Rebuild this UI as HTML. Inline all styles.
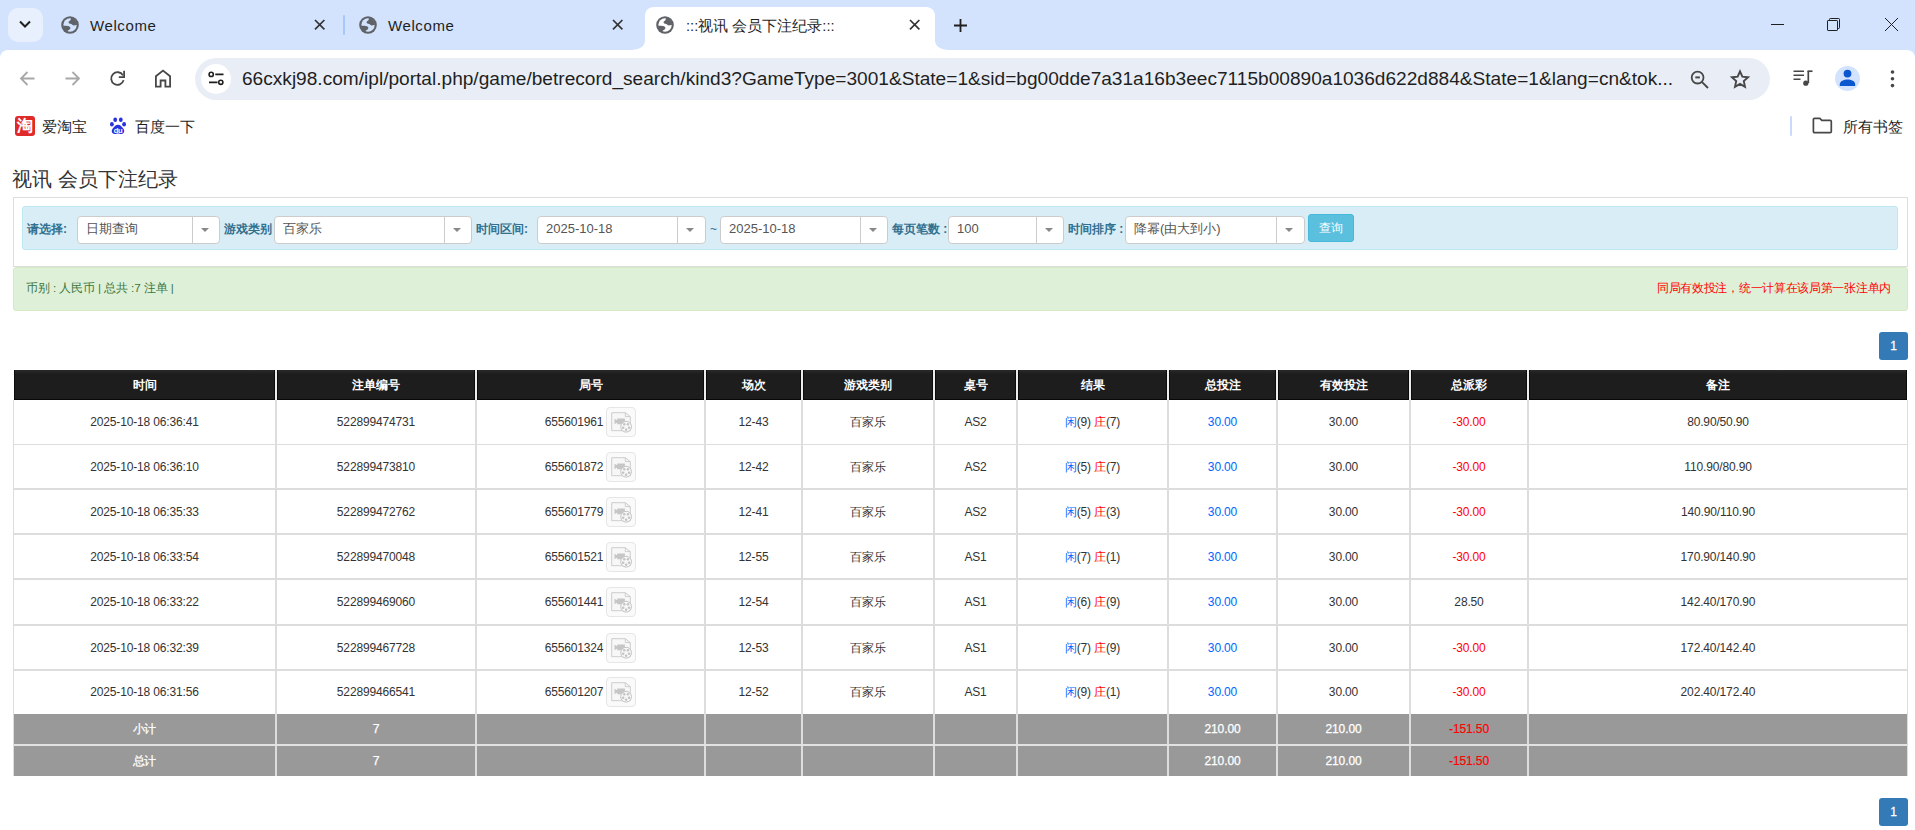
<!DOCTYPE html>
<html><head><meta charset="utf-8"><style>
*{box-sizing:border-box;}
html,body{margin:0;padding:0;}
body{width:1915px;height:830px;overflow:hidden;background:#fff;position:relative;font-family:"Liberation Sans",sans-serif;color:#333;}
.abs{position:absolute;}
#strip{position:absolute;left:0;top:0;width:1915px;height:58px;background:#d3e3fd;}
#tb{position:absolute;left:0;top:50px;width:1915px;height:98px;background:#fff;border-radius:8px 8px 0 0;}
.tabtxt{position:absolute;top:15.6px;font-size:15px;line-height:20px;color:#1f1f1f;white-space:nowrap;letter-spacing:0.6px;}
#omni{position:absolute;left:195px;top:58px;width:1575px;height:42px;border-radius:21px;background:#e9eef6;}
.url{position:absolute;left:242px;top:67px;font-size:19.1px;line-height:24px;color:#1f1f1f;white-space:nowrap;}
.bm{position:absolute;top:118px;font-size:15px;line-height:18px;color:#1f1f1f;white-space:nowrap;}
</style></head><body>
<div id="strip">
<div class="abs" style="left:8px;top:8px;width:35px;height:34px;border-radius:10px;background:#e9f0fd;"></div>
<svg class="abs" style="left:18px;top:18px" width="14" height="12" viewBox="0 0 14 12"><path d="M2 3.5 L7 8.5 L12 3.5" fill="none" stroke="#1f1f1f" stroke-width="2"/></svg>
<svg class="abs" style="left:61px;top:16px" width="18" height="18" viewBox="-9 -9 18 18"><circle r="8.8" fill="#5f6368"/><circle r="6.7" fill="#d3e3fd"/><path d="M0.9 -7.2 C0.8 -5.4 0.8 -4.6 -0.6 -3.9 C-1.7 -3.3 -1.7 -2.0 -0.6 -1.5 C0.6 -1.0 1.7 -1.0 2.3 -0.2 C2.9 0.5 4 0.6 5 0.3 L7.2 -0.2 A7.2 7.2 0 0 0 0.9 -7.2 Z" fill="#5f6368"/><path d="M-7.1 0.4 C-5 0.6 -2.3 0.6 -1.0 1.3 C0 1.9 0.6 2.5 0.3 3.4 C0 4.2 -0.8 4.6 -1.8 5.2 C-2.3 5.6 -2.3 6.4 -2.1 7.0 A7.2 7.2 0 0 1 -7.1 0.4 Z" fill="#5f6368"/></svg>
<div class="tabtxt" style="left:90px;">Welcome</div>
<svg class="abs" style="left:313.3px;top:18.3px" width="13.4" height="13.4" viewBox="-6.7 -6.7 13.4 13.4"><path d="M-4.7 -4.7 L4.7 4.7 M4.7 -4.7 L-4.7 4.7" stroke="#333333" stroke-width="1.7"/></svg>
<div class="abs" style="left:343px;top:15px;width:2px;height:20px;border-radius:1px;background:#a8c7fa;"></div>
<svg class="abs" style="left:359px;top:16px" width="18" height="18" viewBox="-9 -9 18 18"><circle r="8.8" fill="#5f6368"/><circle r="6.7" fill="#d3e3fd"/><path d="M0.9 -7.2 C0.8 -5.4 0.8 -4.6 -0.6 -3.9 C-1.7 -3.3 -1.7 -2.0 -0.6 -1.5 C0.6 -1.0 1.7 -1.0 2.3 -0.2 C2.9 0.5 4 0.6 5 0.3 L7.2 -0.2 A7.2 7.2 0 0 0 0.9 -7.2 Z" fill="#5f6368"/><path d="M-7.1 0.4 C-5 0.6 -2.3 0.6 -1.0 1.3 C0 1.9 0.6 2.5 0.3 3.4 C0 4.2 -0.8 4.6 -1.8 5.2 C-2.3 5.6 -2.3 6.4 -2.1 7.0 A7.2 7.2 0 0 1 -7.1 0.4 Z" fill="#5f6368"/></svg>
<div class="tabtxt" style="left:388px;">Welcome</div>
<svg class="abs" style="left:611.3px;top:18.3px" width="13.4" height="13.4" viewBox="-6.7 -6.7 13.4 13.4"><path d="M-4.7 -4.7 L4.7 4.7 M4.7 -4.7 L-4.7 4.7" stroke="#333333" stroke-width="1.7"/></svg>
<svg class="abs" style="left:629px;top:7px" width="322" height="43" viewBox="0 0 322 43"><path d="M0 43 C8 43 16 41 16 33 L16 9 C16 3.5 19.5 0 25 0 L297 0 C302.5 0 306 3.5 306 9 L306 33 C306 41 314 43 322 43 Z" fill="#fff"/></svg>
<svg class="abs" style="left:656px;top:16px" width="18" height="18" viewBox="-9 -9 18 18"><circle r="8.8" fill="#5f6368"/><circle r="6.7" fill="#fff"/><path d="M0.9 -7.2 C0.8 -5.4 0.8 -4.6 -0.6 -3.9 C-1.7 -3.3 -1.7 -2.0 -0.6 -1.5 C0.6 -1.0 1.7 -1.0 2.3 -0.2 C2.9 0.5 4 0.6 5 0.3 L7.2 -0.2 A7.2 7.2 0 0 0 0.9 -7.2 Z" fill="#5f6368"/><path d="M-7.1 0.4 C-5 0.6 -2.3 0.6 -1.0 1.3 C0 1.9 0.6 2.5 0.3 3.4 C0 4.2 -0.8 4.6 -1.8 5.2 C-2.3 5.6 -2.3 6.4 -2.1 7.0 A7.2 7.2 0 0 1 -7.1 0.4 Z" fill="#5f6368"/></svg>
<div class="tabtxt" style="left:686px;letter-spacing:0;font-size:14.7px;">:::视讯 会员下注纪录:::</div>
<svg class="abs" style="left:908.3px;top:18.3px" width="13.4" height="13.4" viewBox="-6.7 -6.7 13.4 13.4"><path d="M-4.7 -4.7 L4.7 4.7 M4.7 -4.7 L-4.7 4.7" stroke="#333333" stroke-width="1.7"/></svg>
<svg class="abs" style="left:953px;top:18px" width="15" height="15" viewBox="0 0 15 15"><path d="M7.5 1 V14 M1 7.5 H14" stroke="#1f1f1f" stroke-width="1.8"/></svg>
<div class="abs" style="left:1771px;top:24px;width:13px;height:1px;background:#1f1f1f;"></div>
<svg class="abs" style="left:1826px;top:17px" width="15" height="15" viewBox="0 0 15 15"><path d="M3.5 3.5 V2.3 C3.5 1.8 3.8 1.5 4.3 1.5 H12.7 C13.2 1.5 13.5 1.8 13.5 2.3 V10.7 C13.5 11.2 13.2 11.5 12.7 11.5 H11.5" fill="none" stroke="#1f1f1f" stroke-width="1"/><rect x="1.5" y="3.5" width="10" height="10" rx="0.6" fill="none" stroke="#1f1f1f" stroke-width="1"/></svg>
<svg class="abs" style="left:1884px;top:17px" width="15" height="15" viewBox="0 0 15 15"><path d="M1 1 L14 14 M14 1 L1 14" stroke="#1f1f1f" stroke-width="1"/></svg>
</div>
<div id="tb"></div>
<div id="omni"></div>
<svg class="abs" style="left:19px;top:70px" width="17" height="17" viewBox="0 0 17 17"><path d="M15.5 8.5 H2.5 M8.5 2 L2 8.5 L8.5 15" fill="none" stroke="#a8a8a8" stroke-width="1.8"/></svg>
<svg class="abs" style="left:64px;top:70px" width="17" height="17" viewBox="0 0 17 17"><path d="M1.5 8.5 H14.5 M8.5 2 L15 8.5 L8.5 15" fill="none" stroke="#a8a8a8" stroke-width="1.8"/></svg>
<svg class="abs" style="left:108px;top:69px" width="20" height="20" viewBox="0 0 20 20"><path d="M14.96 6.35 A6.3 6.3 0 1 0 15.59 11.13" fill="none" stroke="#474747" stroke-width="1.8"/><path d="M16.1 1.8 V8.2 H10.8" fill="none" stroke="#474747" stroke-width="1.8"/></svg>
<svg class="abs" style="left:153.5px;top:69px" width="18" height="19" viewBox="0 0 18 19"><path d="M1.9 17.6 V7.2 L9 1.6 L16.1 7.2 V17.6 H11.4 V11.5 H6.6 V17.6 Z" fill="none" stroke="#474747" stroke-width="1.8" stroke-linejoin="miter"/></svg>
<div class="abs" style="left:201px;top:64px;width:30px;height:30px;border-radius:15px;background:#fff;"></div>
<svg class="abs" style="left:208px;top:71px" width="17" height="16" viewBox="0 0 17 16"><circle cx="3.2" cy="3.4" r="2.1" fill="none" stroke="#1f1f1f" stroke-width="1.6"/><path d="M7.3 3.4 H15.5 M1 11.3 H9.5" stroke="#1f1f1f" stroke-width="1.7"/><circle cx="12.8" cy="11.3" r="2.1" fill="none" stroke="#1f1f1f" stroke-width="1.6"/></svg>
<div class="url">66cxkj98.com/ipl/portal.php/game/betrecord_search/kind3?GameType=3001&amp;State=1&amp;sid=bg00dde7a31a16b3eec7115b00890a1036d622d884&amp;State=1&amp;lang=cn&amp;tok...</div>
<svg class="abs" style="left:1690px;top:70px" width="20" height="20" viewBox="0 0 20 20"><circle cx="7.6" cy="7.6" r="5.9" fill="none" stroke="#474747" stroke-width="1.8"/><path d="M11.8 11.8 L18 18" stroke="#474747" stroke-width="1.9"/><path d="M5.3 7.4 H9.9" stroke="#474747" stroke-width="2"/></svg>
<svg class="abs" style="left:1729px;top:69px" width="22" height="21" viewBox="0 0 22 21"><path d="M11.00 2.40 L13.35 7.66 L19.08 8.27 L14.80 12.14 L16.00 17.78 L11.00 14.90 L6.00 17.78 L7.20 12.14 L2.92 8.27 L8.65 7.66 Z" fill="none" stroke="#474747" stroke-width="1.9" stroke-linejoin="miter" stroke-miterlimit="3"/></svg>
<svg class="abs" style="left:1793px;top:70px" width="21" height="17" viewBox="0 0 21 17"><path d="M0.5 1.2 H11 M0.5 5.2 H11 M0.5 9.2 H7.5" stroke="#474747" stroke-width="1.6"/><path d="M14.5 1.2 H19.5" stroke="#474747" stroke-width="1.7"/><path d="M15.3 1 V13" stroke="#474747" stroke-width="1.7"/><circle cx="12.8" cy="13.2" r="2.6" fill="#474747"/></svg>
<div class="abs" style="left:1835px;top:66px;width:25px;height:25px;border-radius:13px;background:#d3e3fd;"></div>
<svg class="abs" style="left:1837px;top:69px" width="21" height="19" viewBox="0 0 21 19"><circle cx="10.5" cy="4.6" r="3.9" fill="#0b57d0"/><path d="M2.8 16.9 V15.3 C2.8 11.8 7 10.4 10.5 10.4 C14 10.4 18.2 11.8 18.2 15.3 V16.9 Z" fill="#0b57d0"/></svg>
<svg class="abs" style="left:1888px;top:69px" width="9" height="20" viewBox="0 0 9 20"><circle cx="4.5" cy="3" r="1.8" fill="#474747"/><circle cx="4.5" cy="9.7" r="1.8" fill="#474747"/><circle cx="4.5" cy="16.6" r="1.8" fill="#474747"/></svg>
<div class="abs" style="left:15px;top:116px;width:20px;height:20px;border-radius:3px;background:#e02a2a;"></div>
<div class="abs" style="left:15px;top:116px;width:20px;height:20px;font-size:16px;line-height:20px;text-align:center;color:#fff;font-weight:bold;">淘</div>
<div class="bm" style="left:42px;">爱淘宝</div>
<svg class="abs" style="left:109px;top:117px" width="18" height="18" viewBox="0 0 18 18"><ellipse cx="2.9" cy="7.3" rx="1.9" ry="2.3" fill="#2932e1"/><ellipse cx="6.2" cy="2.8" rx="1.9" ry="2.3" fill="#2932e1"/><ellipse cx="11.8" cy="2.8" rx="1.9" ry="2.3" fill="#2932e1"/><ellipse cx="15.1" cy="7.3" rx="1.9" ry="2.3" fill="#2932e1"/><path d="M9 7.8 C6.5 7.8 5.3 10 3.6 11.8 C2.1 13.4 2.6 17 5.5 17 C7 17 8 16.5 9 16.5 C10 16.5 11 17 12.5 17 C15.4 17 15.9 13.4 14.4 11.8 C12.7 10 11.5 7.8 9 7.8 Z" fill="#2932e1"/><text x="9" y="15.8" font-size="7.6" font-family="Liberation Sans" font-weight="bold" fill="#fff" text-anchor="middle" letter-spacing="-0.3">du</text></svg>
<div class="bm" style="left:135px;">百度一下</div>
<div class="abs" style="left:1790px;top:116px;width:2px;height:20px;border-radius:1px;background:#c9dafc;"></div>
<svg class="abs" style="left:1812px;top:117px" width="21" height="17" viewBox="0 0 21 17"><path d="M1.4 2.5 C1.4 1.8 1.9 1.4 2.5 1.4 H7.8 L9.8 3.4 H18.2 C18.8 3.4 19.3 3.9 19.3 4.5 V14.5 C19.3 15.1 18.8 15.6 18.2 15.6 H2.5 C1.9 15.6 1.4 15.1 1.4 14.5 Z" fill="none" stroke="#474747" stroke-width="1.7"/></svg>
<div class="bm" style="left:1843px;">所有书签</div>

<style>
.t{position:absolute;white-space:nowrap;}
.title{left:12px;top:166px;font-size:20px;line-height:26px;color:#333;}
.panel{position:absolute;left:13px;top:197px;width:1895px;height:70px;border:1px solid #ddd;background:#fff;}
.info{position:absolute;left:22px;top:206px;width:1876px;height:44px;border:1px solid #bce8f1;background:#d9edf7;border-radius:3px;}
.lbl{position:absolute;top:222px;font-size:12px;line-height:14px;font-weight:bold;color:#31708f;white-space:nowrap;}
.sel{position:absolute;top:216px;height:28px;border:1px solid #ccc;border-radius:4px;background:#fff;}
.sel .v{position:absolute;left:8px;top:-1px;line-height:26px;font-size:13px;color:#555;white-space:nowrap;}
.sel .sp{position:absolute;top:0;width:1px;height:26px;background:#ccc;}
.sel .ar{position:absolute;top:11px;width:0;height:0;border-left:4px solid transparent;border-right:4px solid transparent;border-top:4px solid #888;}
.btn{position:absolute;left:1308px;top:214px;width:46px;height:28px;border-radius:3px;background:#5bc0de;border:1px solid #46b8da;color:#fff;font-size:12px;line-height:26px;text-align:center;}
.succ{position:absolute;left:13px;top:267px;width:1895px;height:44px;border:1px solid #d6e9c6;background:#dff0d8;border-radius:3px;}
.stx{position:absolute;top:281px;font-size:11.7px;line-height:14px;white-space:nowrap;}
.pg{position:absolute;left:1879px;width:29px;height:28px;border-radius:3px;background:#337ab7;color:#fff;font-size:12px;text-align:center;line-height:28px;-webkit-text-stroke:0.3px #fff;}
.th{position:absolute;top:370px;height:30px;line-height:30px;text-align:center;color:#fff;font-weight:bold;font-size:12px;}
.td{position:absolute;text-align:center;font-size:12px;letter-spacing:-0.15px;color:#333;white-space:nowrap;}
.gr{position:absolute;text-align:center;font-size:12px;color:#fff;white-space:nowrap;letter-spacing:-0.1px;-webkit-text-stroke:0.25px #fff;}
.ib{display:inline-block;vertical-align:middle;width:30px;height:30px;border:1px solid #e6e6e6;border-radius:4px;background:#fafafa;position:relative;margin-left:3px;top:-1px;}
.blu{color:#0066ff;}
.red{color:#ff0000;}
</style>

<div class="t title">视讯 会员下注纪录</div>
<div class="panel"></div>
<div class="info"></div>
<div class="lbl" style="left:27px;">请选择:</div>
<div class="sel" style="left:77px;width:143px;"><div class="v">日期查询</div><div class="sp" style="left:114px"></div><div class="ar" style="left:123px"></div></div>
<div class="lbl" style="left:224px;">游戏类别</div>
<div class="sel" style="left:274px;width:198px;"><div class="v">百家乐</div><div class="sp" style="left:169px"></div><div class="ar" style="left:178px"></div></div>
<div class="lbl" style="left:476px;">时间区间:</div>
<div class="sel" style="left:537px;width:169px;"><div class="v">2025-10-18</div><div class="sp" style="left:139px"></div><div class="ar" style="left:148px"></div></div>
<div class="t" style="left:710px;top:222px;font-size:12px;line-height:14px;color:#31708f;">~</div>
<div class="sel" style="left:720px;width:168px;"><div class="v">2025-10-18</div><div class="sp" style="left:139px"></div><div class="ar" style="left:148px"></div></div>
<div class="lbl" style="left:892px;">每页笔数 :</div>
<div class="sel" style="left:948px;width:116px;"><div class="v">100</div><div class="sp" style="left:87px"></div><div class="ar" style="left:96px"></div></div>
<div class="lbl" style="left:1068px;">时间排序 :</div>
<div class="sel" style="left:1125px;width:180px;"><div class="v">降幂(由大到小)</div><div class="sp" style="left:150px"></div><div class="ar" style="left:159px"></div></div>
<div class="btn">查询</div>
<div class="succ"></div>
<div class="stx" style="left:26px;color:#3c763d;letter-spacing:-0.1px;">币别 : 人民币 | 总共 :7 注单 |</div>
<div class="stx" style="right:24px;color:#ff0000;letter-spacing:-0.3px;">同局有效投注，统一计算在该局第一张注单内</div>
<div class="pg" style="top:332px;">1</div>
<div class="pg" style="top:798px;">1</div>
<div class="abs" style="left:14px;top:370px;width:261px;height:30px;background:linear-gradient(#2a2a2a 0px,#1d1d1d 4px,#1d1d1d);border-left:1px solid #0b0b0b;border-right:1px solid #0b0b0b;border-bottom:1px solid #080808;"></div>
<div class="th" style="left:14px;width:261px;">时间</div>
<div class="abs" style="left:277px;top:370px;width:198px;height:30px;background:linear-gradient(#2a2a2a 0px,#1d1d1d 4px,#1d1d1d);border-left:1px solid #0b0b0b;border-right:1px solid #0b0b0b;border-bottom:1px solid #080808;"></div>
<div class="th" style="left:277px;width:198px;">注单编号</div>
<div class="abs" style="left:477px;top:370px;width:227px;height:30px;background:linear-gradient(#2a2a2a 0px,#1d1d1d 4px,#1d1d1d);border-left:1px solid #0b0b0b;border-right:1px solid #0b0b0b;border-bottom:1px solid #080808;"></div>
<div class="th" style="left:477px;width:227px;">局号</div>
<div class="abs" style="left:706px;top:370px;width:95px;height:30px;background:linear-gradient(#2a2a2a 0px,#1d1d1d 4px,#1d1d1d);border-left:1px solid #0b0b0b;border-right:1px solid #0b0b0b;border-bottom:1px solid #080808;"></div>
<div class="th" style="left:706px;width:95px;">场次</div>
<div class="abs" style="left:803px;top:370px;width:130px;height:30px;background:linear-gradient(#2a2a2a 0px,#1d1d1d 4px,#1d1d1d);border-left:1px solid #0b0b0b;border-right:1px solid #0b0b0b;border-bottom:1px solid #080808;"></div>
<div class="th" style="left:803px;width:130px;">游戏类别</div>
<div class="abs" style="left:935px;top:370px;width:81px;height:30px;background:linear-gradient(#2a2a2a 0px,#1d1d1d 4px,#1d1d1d);border-left:1px solid #0b0b0b;border-right:1px solid #0b0b0b;border-bottom:1px solid #080808;"></div>
<div class="th" style="left:935px;width:81px;">桌号</div>
<div class="abs" style="left:1018px;top:370px;width:149px;height:30px;background:linear-gradient(#2a2a2a 0px,#1d1d1d 4px,#1d1d1d);border-left:1px solid #0b0b0b;border-right:1px solid #0b0b0b;border-bottom:1px solid #080808;"></div>
<div class="th" style="left:1018px;width:149px;">结果</div>
<div class="abs" style="left:1169px;top:370px;width:107px;height:30px;background:linear-gradient(#2a2a2a 0px,#1d1d1d 4px,#1d1d1d);border-left:1px solid #0b0b0b;border-right:1px solid #0b0b0b;border-bottom:1px solid #080808;"></div>
<div class="th" style="left:1169px;width:107px;">总投注</div>
<div class="abs" style="left:1278px;top:370px;width:131px;height:30px;background:linear-gradient(#2a2a2a 0px,#1d1d1d 4px,#1d1d1d);border-left:1px solid #0b0b0b;border-right:1px solid #0b0b0b;border-bottom:1px solid #080808;"></div>
<div class="th" style="left:1278px;width:131px;">有效投注</div>
<div class="abs" style="left:1411px;top:370px;width:116px;height:30px;background:linear-gradient(#2a2a2a 0px,#1d1d1d 4px,#1d1d1d);border-left:1px solid #0b0b0b;border-right:1px solid #0b0b0b;border-bottom:1px solid #080808;"></div>
<div class="th" style="left:1411px;width:116px;">总派彩</div>
<div class="abs" style="left:1529px;top:370px;width:378px;height:30px;background:linear-gradient(#2a2a2a 0px,#1d1d1d 4px,#1d1d1d);border-left:1px solid #0b0b0b;border-right:1px solid #0b0b0b;border-bottom:1px solid #080808;"></div>
<div class="th" style="left:1529px;width:378px;">备注</div>
<div class="abs" style="left:275px;top:370px;width:2px;height:30px;background:#ececec;"></div>
<div class="abs" style="left:475px;top:370px;width:2px;height:30px;background:#ececec;"></div>
<div class="abs" style="left:704px;top:370px;width:2px;height:30px;background:#ececec;"></div>
<div class="abs" style="left:801px;top:370px;width:2px;height:30px;background:#ececec;"></div>
<div class="abs" style="left:933px;top:370px;width:2px;height:30px;background:#ececec;"></div>
<div class="abs" style="left:1016px;top:370px;width:2px;height:30px;background:#ececec;"></div>
<div class="abs" style="left:1167px;top:370px;width:2px;height:30px;background:#ececec;"></div>
<div class="abs" style="left:1276px;top:370px;width:2px;height:30px;background:#ececec;"></div>
<div class="abs" style="left:1409px;top:370px;width:2px;height:30px;background:#ececec;"></div>
<div class="abs" style="left:1527px;top:370px;width:2px;height:30px;background:#ececec;"></div>
<div class="abs" style="left:13px;top:400px;width:1px;height:376px;background:#ddd;"></div>
<div class="abs" style="left:1907px;top:400px;width:1px;height:376px;background:#ddd;"></div>
<div class="abs" style="left:275px;top:400px;width:2px;height:376px;background:#ddd;"></div>
<div class="abs" style="left:475px;top:400px;width:2px;height:376px;background:#ddd;"></div>
<div class="abs" style="left:704px;top:400px;width:2px;height:376px;background:#ddd;"></div>
<div class="abs" style="left:801px;top:400px;width:2px;height:376px;background:#ddd;"></div>
<div class="abs" style="left:933px;top:400px;width:2px;height:376px;background:#ddd;"></div>
<div class="abs" style="left:1016px;top:400px;width:2px;height:376px;background:#ddd;"></div>
<div class="abs" style="left:1167px;top:400px;width:2px;height:376px;background:#ddd;"></div>
<div class="abs" style="left:1276px;top:400px;width:2px;height:376px;background:#ddd;"></div>
<div class="abs" style="left:1409px;top:400px;width:2px;height:376px;background:#ddd;"></div>
<div class="abs" style="left:1527px;top:400px;width:2px;height:376px;background:#ddd;"></div>
<div class="abs" style="left:13px;top:444px;width:1895px;height:1px;background:#ddd;"></div>
<div class="abs" style="left:13px;top:488px;width:1895px;height:2px;background:#ddd;"></div>
<div class="abs" style="left:13px;top:533px;width:1895px;height:2px;background:#ddd;"></div>
<div class="abs" style="left:13px;top:578px;width:1895px;height:2px;background:#ddd;"></div>
<div class="abs" style="left:13px;top:624px;width:1895px;height:2px;background:#ddd;"></div>
<div class="abs" style="left:13px;top:669px;width:1895px;height:2px;background:#ddd;"></div>
<div class="abs" style="left:14px;top:714px;width:261px;height:30px;background:#999;"></div>
<div class="abs" style="left:277px;top:714px;width:198px;height:30px;background:#999;"></div>
<div class="abs" style="left:477px;top:714px;width:227px;height:30px;background:#999;"></div>
<div class="abs" style="left:706px;top:714px;width:95px;height:30px;background:#999;"></div>
<div class="abs" style="left:803px;top:714px;width:130px;height:30px;background:#999;"></div>
<div class="abs" style="left:935px;top:714px;width:81px;height:30px;background:#999;"></div>
<div class="abs" style="left:1018px;top:714px;width:149px;height:30px;background:#999;"></div>
<div class="abs" style="left:1169px;top:714px;width:107px;height:30px;background:#999;"></div>
<div class="abs" style="left:1278px;top:714px;width:131px;height:30px;background:#999;"></div>
<div class="abs" style="left:1411px;top:714px;width:116px;height:30px;background:#999;"></div>
<div class="abs" style="left:1529px;top:714px;width:378px;height:30px;background:#999;"></div>
<div class="abs" style="left:14px;top:746px;width:261px;height:30px;background:#999;"></div>
<div class="abs" style="left:277px;top:746px;width:198px;height:30px;background:#999;"></div>
<div class="abs" style="left:477px;top:746px;width:227px;height:30px;background:#999;"></div>
<div class="abs" style="left:706px;top:746px;width:95px;height:30px;background:#999;"></div>
<div class="abs" style="left:803px;top:746px;width:130px;height:30px;background:#999;"></div>
<div class="abs" style="left:935px;top:746px;width:81px;height:30px;background:#999;"></div>
<div class="abs" style="left:1018px;top:746px;width:149px;height:30px;background:#999;"></div>
<div class="abs" style="left:1169px;top:746px;width:107px;height:30px;background:#999;"></div>
<div class="abs" style="left:1278px;top:746px;width:131px;height:30px;background:#999;"></div>
<div class="abs" style="left:1411px;top:746px;width:116px;height:30px;background:#999;"></div>
<div class="abs" style="left:1529px;top:746px;width:378px;height:30px;background:#999;"></div>
<div class="abs" style="left:14px;top:744px;width:1893px;height:2px;background:#e2e2e2;"></div>
<div class="td" style="left:14px;top:400px;width:261px;height:44px;line-height:44px;">2025-10-18 06:36:41</div>
<div class="td" style="left:277px;top:400px;width:198px;height:44px;line-height:44px;">522899474731</div>
<div class="td" style="left:477px;top:400px;width:227px;height:44px;line-height:44px;">655601961<span class="ib"><svg style="position:absolute;left:3px;top:3px" width="24" height="24" viewBox="0 0 24 24"><path d="M1.7 1.7 H15.3 L20.3 5.6 V19.7 H1.7 Z" fill="#f7f7f7" stroke="#cdcdcd" stroke-width="1"/><path d="M15.3 1.7 V5.6 H20.3" fill="none" stroke="#cdcdcd" stroke-width="1"/><path d="M4.5 7.8 L7.2 9.3 V11.6 L4.5 13.2 Z M7.2 7.5 H14.9 V13.3 H7.2 Z" fill="#c6c6c6"/><circle cx="16.1" cy="15.7" r="5.4" fill="#f7f7f7" stroke="#c4c4c4" stroke-width="1"/><circle cx="14.28" cy="13.19" r="1.25" fill="#c4c4c4"/><circle cx="17.92" cy="13.19" r="1.25" fill="#c4c4c4"/><circle cx="19.05" cy="16.66" r="1.25" fill="#c4c4c4"/><circle cx="16.10" cy="18.80" r="1.25" fill="#c4c4c4"/><circle cx="13.15" cy="16.66" r="1.25" fill="#c4c4c4"/></svg></span></div>
<div class="td" style="left:706px;top:400px;width:95px;height:44px;line-height:44px;">12-43</div>
<div class="td" style="left:803px;top:400px;width:130px;height:44px;line-height:44px;">百家乐</div>
<div class="td" style="left:935px;top:400px;width:81px;height:44px;line-height:44px;">AS2</div>
<div class="td" style="left:1018px;top:400px;width:149px;height:44px;line-height:44px;"><span class="blu">闲</span>(9) <span class="red">庄</span>(7)</div>
<div class="td" style="left:1169px;top:400px;width:107px;height:44px;line-height:44px;"><span class="blu">30.00</span></div>
<div class="td" style="left:1278px;top:400px;width:131px;height:44px;line-height:44px;">30.00</div>
<div class="td" style="left:1411px;top:400px;width:116px;height:44px;line-height:44px;"><span class="red">-30.00</span></div>
<div class="td" style="left:1529px;top:400px;width:378px;height:44px;line-height:44px;">80.90/50.90</div>
<div class="td" style="left:14px;top:445px;width:261px;height:44px;line-height:44px;">2025-10-18 06:36:10</div>
<div class="td" style="left:277px;top:445px;width:198px;height:44px;line-height:44px;">522899473810</div>
<div class="td" style="left:477px;top:445px;width:227px;height:44px;line-height:44px;">655601872<span class="ib"><svg style="position:absolute;left:3px;top:3px" width="24" height="24" viewBox="0 0 24 24"><path d="M1.7 1.7 H15.3 L20.3 5.6 V19.7 H1.7 Z" fill="#f7f7f7" stroke="#cdcdcd" stroke-width="1"/><path d="M15.3 1.7 V5.6 H20.3" fill="none" stroke="#cdcdcd" stroke-width="1"/><path d="M4.5 7.8 L7.2 9.3 V11.6 L4.5 13.2 Z M7.2 7.5 H14.9 V13.3 H7.2 Z" fill="#c6c6c6"/><circle cx="16.1" cy="15.7" r="5.4" fill="#f7f7f7" stroke="#c4c4c4" stroke-width="1"/><circle cx="14.28" cy="13.19" r="1.25" fill="#c4c4c4"/><circle cx="17.92" cy="13.19" r="1.25" fill="#c4c4c4"/><circle cx="19.05" cy="16.66" r="1.25" fill="#c4c4c4"/><circle cx="16.10" cy="18.80" r="1.25" fill="#c4c4c4"/><circle cx="13.15" cy="16.66" r="1.25" fill="#c4c4c4"/></svg></span></div>
<div class="td" style="left:706px;top:445px;width:95px;height:44px;line-height:44px;">12-42</div>
<div class="td" style="left:803px;top:445px;width:130px;height:44px;line-height:44px;">百家乐</div>
<div class="td" style="left:935px;top:445px;width:81px;height:44px;line-height:44px;">AS2</div>
<div class="td" style="left:1018px;top:445px;width:149px;height:44px;line-height:44px;"><span class="blu">闲</span>(5) <span class="red">庄</span>(7)</div>
<div class="td" style="left:1169px;top:445px;width:107px;height:44px;line-height:44px;"><span class="blu">30.00</span></div>
<div class="td" style="left:1278px;top:445px;width:131px;height:44px;line-height:44px;">30.00</div>
<div class="td" style="left:1411px;top:445px;width:116px;height:44px;line-height:44px;"><span class="red">-30.00</span></div>
<div class="td" style="left:1529px;top:445px;width:378px;height:44px;line-height:44px;">110.90/80.90</div>
<div class="td" style="left:14px;top:490px;width:261px;height:44px;line-height:44px;">2025-10-18 06:35:33</div>
<div class="td" style="left:277px;top:490px;width:198px;height:44px;line-height:44px;">522899472762</div>
<div class="td" style="left:477px;top:490px;width:227px;height:44px;line-height:44px;">655601779<span class="ib"><svg style="position:absolute;left:3px;top:3px" width="24" height="24" viewBox="0 0 24 24"><path d="M1.7 1.7 H15.3 L20.3 5.6 V19.7 H1.7 Z" fill="#f7f7f7" stroke="#cdcdcd" stroke-width="1"/><path d="M15.3 1.7 V5.6 H20.3" fill="none" stroke="#cdcdcd" stroke-width="1"/><path d="M4.5 7.8 L7.2 9.3 V11.6 L4.5 13.2 Z M7.2 7.5 H14.9 V13.3 H7.2 Z" fill="#c6c6c6"/><circle cx="16.1" cy="15.7" r="5.4" fill="#f7f7f7" stroke="#c4c4c4" stroke-width="1"/><circle cx="14.28" cy="13.19" r="1.25" fill="#c4c4c4"/><circle cx="17.92" cy="13.19" r="1.25" fill="#c4c4c4"/><circle cx="19.05" cy="16.66" r="1.25" fill="#c4c4c4"/><circle cx="16.10" cy="18.80" r="1.25" fill="#c4c4c4"/><circle cx="13.15" cy="16.66" r="1.25" fill="#c4c4c4"/></svg></span></div>
<div class="td" style="left:706px;top:490px;width:95px;height:44px;line-height:44px;">12-41</div>
<div class="td" style="left:803px;top:490px;width:130px;height:44px;line-height:44px;">百家乐</div>
<div class="td" style="left:935px;top:490px;width:81px;height:44px;line-height:44px;">AS2</div>
<div class="td" style="left:1018px;top:490px;width:149px;height:44px;line-height:44px;"><span class="blu">闲</span>(5) <span class="red">庄</span>(3)</div>
<div class="td" style="left:1169px;top:490px;width:107px;height:44px;line-height:44px;"><span class="blu">30.00</span></div>
<div class="td" style="left:1278px;top:490px;width:131px;height:44px;line-height:44px;">30.00</div>
<div class="td" style="left:1411px;top:490px;width:116px;height:44px;line-height:44px;"><span class="red">-30.00</span></div>
<div class="td" style="left:1529px;top:490px;width:378px;height:44px;line-height:44px;">140.90/110.90</div>
<div class="td" style="left:14px;top:535px;width:261px;height:44px;line-height:44px;">2025-10-18 06:33:54</div>
<div class="td" style="left:277px;top:535px;width:198px;height:44px;line-height:44px;">522899470048</div>
<div class="td" style="left:477px;top:535px;width:227px;height:44px;line-height:44px;">655601521<span class="ib"><svg style="position:absolute;left:3px;top:3px" width="24" height="24" viewBox="0 0 24 24"><path d="M1.7 1.7 H15.3 L20.3 5.6 V19.7 H1.7 Z" fill="#f7f7f7" stroke="#cdcdcd" stroke-width="1"/><path d="M15.3 1.7 V5.6 H20.3" fill="none" stroke="#cdcdcd" stroke-width="1"/><path d="M4.5 7.8 L7.2 9.3 V11.6 L4.5 13.2 Z M7.2 7.5 H14.9 V13.3 H7.2 Z" fill="#c6c6c6"/><circle cx="16.1" cy="15.7" r="5.4" fill="#f7f7f7" stroke="#c4c4c4" stroke-width="1"/><circle cx="14.28" cy="13.19" r="1.25" fill="#c4c4c4"/><circle cx="17.92" cy="13.19" r="1.25" fill="#c4c4c4"/><circle cx="19.05" cy="16.66" r="1.25" fill="#c4c4c4"/><circle cx="16.10" cy="18.80" r="1.25" fill="#c4c4c4"/><circle cx="13.15" cy="16.66" r="1.25" fill="#c4c4c4"/></svg></span></div>
<div class="td" style="left:706px;top:535px;width:95px;height:44px;line-height:44px;">12-55</div>
<div class="td" style="left:803px;top:535px;width:130px;height:44px;line-height:44px;">百家乐</div>
<div class="td" style="left:935px;top:535px;width:81px;height:44px;line-height:44px;">AS1</div>
<div class="td" style="left:1018px;top:535px;width:149px;height:44px;line-height:44px;"><span class="blu">闲</span>(7) <span class="red">庄</span>(1)</div>
<div class="td" style="left:1169px;top:535px;width:107px;height:44px;line-height:44px;"><span class="blu">30.00</span></div>
<div class="td" style="left:1278px;top:535px;width:131px;height:44px;line-height:44px;">30.00</div>
<div class="td" style="left:1411px;top:535px;width:116px;height:44px;line-height:44px;"><span class="red">-30.00</span></div>
<div class="td" style="left:1529px;top:535px;width:378px;height:44px;line-height:44px;">170.90/140.90</div>
<div class="td" style="left:14px;top:580px;width:261px;height:45px;line-height:45px;">2025-10-18 06:33:22</div>
<div class="td" style="left:277px;top:580px;width:198px;height:45px;line-height:45px;">522899469060</div>
<div class="td" style="left:477px;top:580px;width:227px;height:45px;line-height:45px;">655601441<span class="ib"><svg style="position:absolute;left:3px;top:3px" width="24" height="24" viewBox="0 0 24 24"><path d="M1.7 1.7 H15.3 L20.3 5.6 V19.7 H1.7 Z" fill="#f7f7f7" stroke="#cdcdcd" stroke-width="1"/><path d="M15.3 1.7 V5.6 H20.3" fill="none" stroke="#cdcdcd" stroke-width="1"/><path d="M4.5 7.8 L7.2 9.3 V11.6 L4.5 13.2 Z M7.2 7.5 H14.9 V13.3 H7.2 Z" fill="#c6c6c6"/><circle cx="16.1" cy="15.7" r="5.4" fill="#f7f7f7" stroke="#c4c4c4" stroke-width="1"/><circle cx="14.28" cy="13.19" r="1.25" fill="#c4c4c4"/><circle cx="17.92" cy="13.19" r="1.25" fill="#c4c4c4"/><circle cx="19.05" cy="16.66" r="1.25" fill="#c4c4c4"/><circle cx="16.10" cy="18.80" r="1.25" fill="#c4c4c4"/><circle cx="13.15" cy="16.66" r="1.25" fill="#c4c4c4"/></svg></span></div>
<div class="td" style="left:706px;top:580px;width:95px;height:45px;line-height:45px;">12-54</div>
<div class="td" style="left:803px;top:580px;width:130px;height:45px;line-height:45px;">百家乐</div>
<div class="td" style="left:935px;top:580px;width:81px;height:45px;line-height:45px;">AS1</div>
<div class="td" style="left:1018px;top:580px;width:149px;height:45px;line-height:45px;"><span class="blu">闲</span>(6) <span class="red">庄</span>(9)</div>
<div class="td" style="left:1169px;top:580px;width:107px;height:45px;line-height:45px;"><span class="blu">30.00</span></div>
<div class="td" style="left:1278px;top:580px;width:131px;height:45px;line-height:45px;">30.00</div>
<div class="td" style="left:1411px;top:580px;width:116px;height:45px;line-height:45px;"><span class="">28.50</span></div>
<div class="td" style="left:1529px;top:580px;width:378px;height:45px;line-height:45px;">142.40/170.90</div>
<div class="td" style="left:14px;top:626px;width:261px;height:44px;line-height:44px;">2025-10-18 06:32:39</div>
<div class="td" style="left:277px;top:626px;width:198px;height:44px;line-height:44px;">522899467728</div>
<div class="td" style="left:477px;top:626px;width:227px;height:44px;line-height:44px;">655601324<span class="ib"><svg style="position:absolute;left:3px;top:3px" width="24" height="24" viewBox="0 0 24 24"><path d="M1.7 1.7 H15.3 L20.3 5.6 V19.7 H1.7 Z" fill="#f7f7f7" stroke="#cdcdcd" stroke-width="1"/><path d="M15.3 1.7 V5.6 H20.3" fill="none" stroke="#cdcdcd" stroke-width="1"/><path d="M4.5 7.8 L7.2 9.3 V11.6 L4.5 13.2 Z M7.2 7.5 H14.9 V13.3 H7.2 Z" fill="#c6c6c6"/><circle cx="16.1" cy="15.7" r="5.4" fill="#f7f7f7" stroke="#c4c4c4" stroke-width="1"/><circle cx="14.28" cy="13.19" r="1.25" fill="#c4c4c4"/><circle cx="17.92" cy="13.19" r="1.25" fill="#c4c4c4"/><circle cx="19.05" cy="16.66" r="1.25" fill="#c4c4c4"/><circle cx="16.10" cy="18.80" r="1.25" fill="#c4c4c4"/><circle cx="13.15" cy="16.66" r="1.25" fill="#c4c4c4"/></svg></span></div>
<div class="td" style="left:706px;top:626px;width:95px;height:44px;line-height:44px;">12-53</div>
<div class="td" style="left:803px;top:626px;width:130px;height:44px;line-height:44px;">百家乐</div>
<div class="td" style="left:935px;top:626px;width:81px;height:44px;line-height:44px;">AS1</div>
<div class="td" style="left:1018px;top:626px;width:149px;height:44px;line-height:44px;"><span class="blu">闲</span>(7) <span class="red">庄</span>(9)</div>
<div class="td" style="left:1169px;top:626px;width:107px;height:44px;line-height:44px;"><span class="blu">30.00</span></div>
<div class="td" style="left:1278px;top:626px;width:131px;height:44px;line-height:44px;">30.00</div>
<div class="td" style="left:1411px;top:626px;width:116px;height:44px;line-height:44px;"><span class="red">-30.00</span></div>
<div class="td" style="left:1529px;top:626px;width:378px;height:44px;line-height:44px;">172.40/142.40</div>
<div class="td" style="left:14px;top:671px;width:261px;height:43px;line-height:43px;">2025-10-18 06:31:56</div>
<div class="td" style="left:277px;top:671px;width:198px;height:43px;line-height:43px;">522899466541</div>
<div class="td" style="left:477px;top:671px;width:227px;height:43px;line-height:43px;">655601207<span class="ib"><svg style="position:absolute;left:3px;top:3px" width="24" height="24" viewBox="0 0 24 24"><path d="M1.7 1.7 H15.3 L20.3 5.6 V19.7 H1.7 Z" fill="#f7f7f7" stroke="#cdcdcd" stroke-width="1"/><path d="M15.3 1.7 V5.6 H20.3" fill="none" stroke="#cdcdcd" stroke-width="1"/><path d="M4.5 7.8 L7.2 9.3 V11.6 L4.5 13.2 Z M7.2 7.5 H14.9 V13.3 H7.2 Z" fill="#c6c6c6"/><circle cx="16.1" cy="15.7" r="5.4" fill="#f7f7f7" stroke="#c4c4c4" stroke-width="1"/><circle cx="14.28" cy="13.19" r="1.25" fill="#c4c4c4"/><circle cx="17.92" cy="13.19" r="1.25" fill="#c4c4c4"/><circle cx="19.05" cy="16.66" r="1.25" fill="#c4c4c4"/><circle cx="16.10" cy="18.80" r="1.25" fill="#c4c4c4"/><circle cx="13.15" cy="16.66" r="1.25" fill="#c4c4c4"/></svg></span></div>
<div class="td" style="left:706px;top:671px;width:95px;height:43px;line-height:43px;">12-52</div>
<div class="td" style="left:803px;top:671px;width:130px;height:43px;line-height:43px;">百家乐</div>
<div class="td" style="left:935px;top:671px;width:81px;height:43px;line-height:43px;">AS1</div>
<div class="td" style="left:1018px;top:671px;width:149px;height:43px;line-height:43px;"><span class="blu">闲</span>(9) <span class="red">庄</span>(1)</div>
<div class="td" style="left:1169px;top:671px;width:107px;height:43px;line-height:43px;"><span class="blu">30.00</span></div>
<div class="td" style="left:1278px;top:671px;width:131px;height:43px;line-height:43px;">30.00</div>
<div class="td" style="left:1411px;top:671px;width:116px;height:43px;line-height:43px;"><span class="red">-30.00</span></div>
<div class="td" style="left:1529px;top:671px;width:378px;height:43px;line-height:43px;">202.40/172.40</div>
<div class="gr" style="left:14px;top:714px;width:261px;height:31px;line-height:31px;">小计</div>
<div class="gr" style="left:277px;top:714px;width:198px;height:31px;line-height:31px;">7</div>
<div class="gr" style="left:1169px;top:714px;width:107px;height:31px;line-height:31px;">210.00</div>
<div class="gr" style="left:1278px;top:714px;width:131px;height:31px;line-height:31px;">210.00</div>
<div class="gr" style="left:1411px;top:714px;width:116px;height:31px;line-height:31px;"><span class="red" style="font-weight:normal;-webkit-text-stroke:0.2px #ff0000;">-151.50</span></div>
<div class="gr" style="left:14px;top:746px;width:261px;height:30px;line-height:30px;">总计</div>
<div class="gr" style="left:277px;top:746px;width:198px;height:30px;line-height:30px;">7</div>
<div class="gr" style="left:1169px;top:746px;width:107px;height:30px;line-height:30px;">210.00</div>
<div class="gr" style="left:1278px;top:746px;width:131px;height:30px;line-height:30px;">210.00</div>
<div class="gr" style="left:1411px;top:746px;width:116px;height:30px;line-height:30px;"><span class="red" style="font-weight:normal;-webkit-text-stroke:0.2px #ff0000;">-151.50</span></div>
</body></html>
